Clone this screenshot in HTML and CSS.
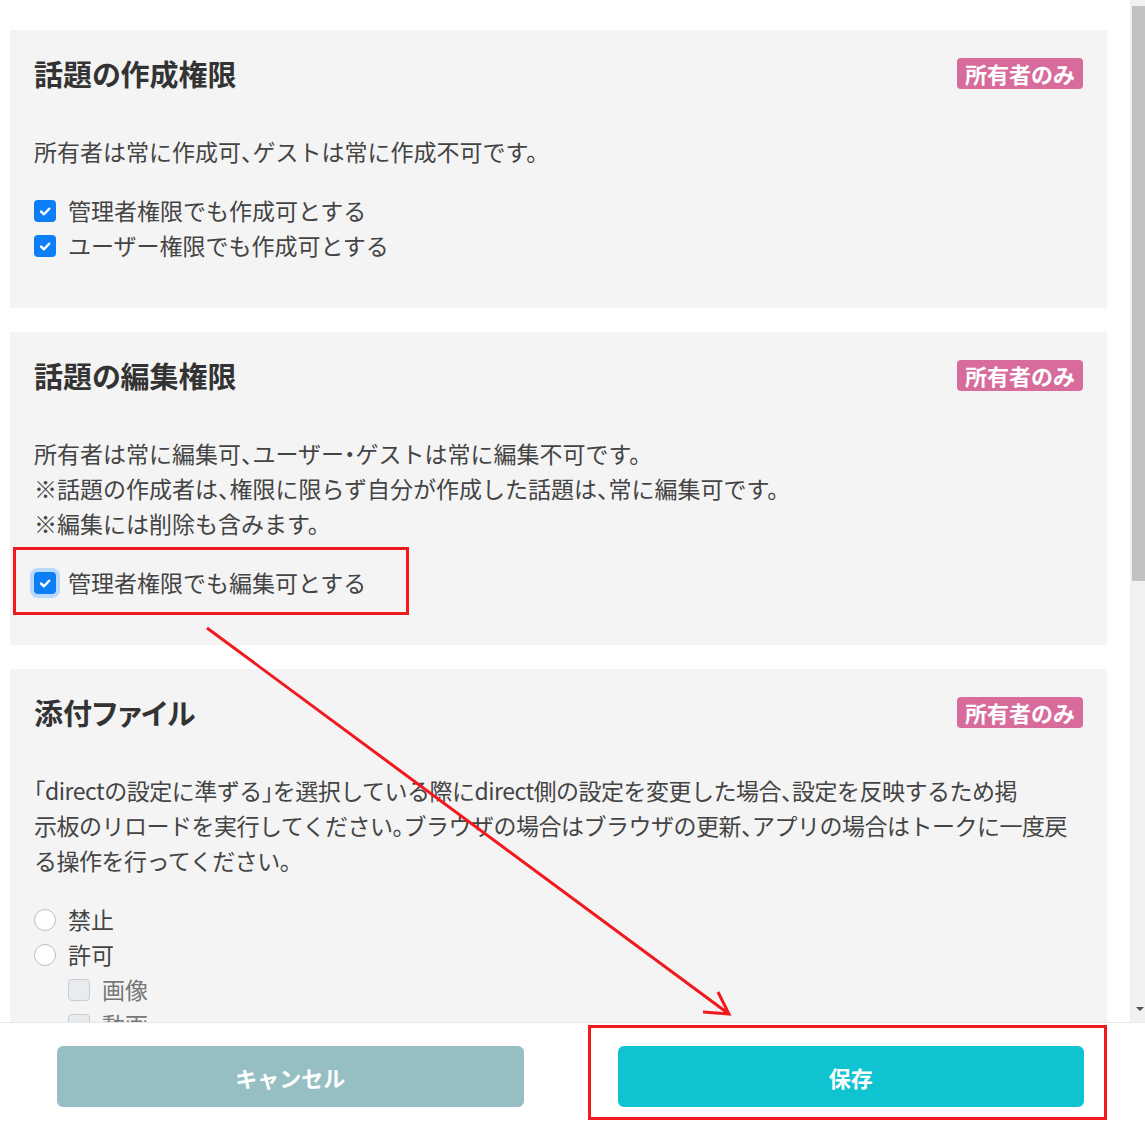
FILE: index.html
```html
<!DOCTYPE html>
<html lang="ja">
<head>
    <meta charset="UTF-8">
    <meta name="viewport" content="width=device-width, initial-scale=1.0">
    <title>掲示板の設定</title>
    <link rel="stylesheet" href="styles.css">
</head>
<body>
    <div class="main">
        <div class="scroll">
            <section class="card">
                <div class="card-head">
                    <h2>話題の作成権限</h2>
                    <span class="badge">所有者のみ</span>
                </div>
                <p class="desc">所有者は常に作成可、ゲストは常に作成不可です。</p>
                <div class="options">
                    <label class="opt"><span class="check on"><svg viewBox="0 0 22 22"><path d="M7 11.5l3 2.8 5.2-5.6"/></svg></span>管理者権限でも作成可とする</label>
                    <label class="opt"><span class="check on"><svg viewBox="0 0 22 22"><path d="M7 11.5l3 2.8 5.2-5.6"/></svg></span>ユーザー権限でも作成可とする</label>
                </div>
            </section>

            <section class="card">
                <div class="card-head">
                    <h2>話題の編集権限</h2>
                    <span class="badge">所有者のみ</span>
                </div>
                <p class="desc">所有者は常に編集可、ユーザー・ゲストは常に編集不可です。<br>※話題の作成者は、権限に限らず自分が作成した話題は、常に編集可です。<br>※編集には削除も含みます。</p>
                <div class="options">
                    <label class="opt"><span class="check on focus"><svg viewBox="0 0 22 22"><path d="M7 11.5l3 2.8 5.2-5.6"/></svg></span>管理者権限でも編集可とする</label>
                </div>
            </section>

            <section class="card">
                <div class="card-head">
                    <h2>添付ファイル</h2>
                    <span class="badge">所有者のみ</span>
                </div>
                <p class="desc tight">「directの設定に準ずる」を選択している際にdirect側の設定を変更した場合、設定を反映するため掲<br>示板のリロードを実行してください。ブラウザの場合はブラウザの更新、アプリの場合はトークに一度戻<br>る操作を行ってください。</p>
                <div class="options">
                    <label class="opt"><span class="radio"></span>禁止</label>
                    <label class="opt"><span class="radio"></span>許可</label>
                    <label class="opt sub"><span class="check off"></span>画像</label>
                    <label class="opt sub"><span class="check off"></span>動画</label>
                    <label class="opt sub"><span class="check off"></span>その他のファイル</label>
                    <label class="opt"><span class="radio"></span>directの設定に準ずる</label>
                </div>
            </section>
        </div>

        <div class="scrollbar">
            <div class="thumb"></div>
            <div class="arrow-down"></div>
        </div>
    </div>

    <div class="footer">
        <button class="btn cancel">キャンセル</button>
        <button class="btn save">保存</button>
    </div>

    <!-- annotations -->
    <svg class="marks" width="1145" height="1127" viewBox="0 0 1145 1127">
        <rect x="14.5" y="548.5" width="393" height="65"/>
        <rect x="589.5" y="1026.5" width="516" height="92"/>
        <path d="M207 628 L729 1014 M703 1012 L729 1014 L718 992"/>
    </svg>
</body>
</html>
```

FILE: styles.css
```css
* {
    box-sizing: border-box;
}
body {
    margin: 0;
    width: 1145px;
    height: 1127px;
    overflow: hidden;
    position: relative;
    background-color: #fff;
    color: #333;
    font-family: "Noto Sans CJK JP", "Noto Sans", sans-serif;
}
.main {
    display: flex;
    height: 1022px;
}
.scroll {
    flex: 1;
    overflow: hidden;
    padding: 30px 23px 0 10px;
}
.scrollbar {
    width: 15px;
    background-color: #f1f1f1;
    display: flex;
    flex-direction: column;
    align-items: flex-end;
    justify-content: space-between;
    padding: 6px 0 11px;
}
.thumb {
    width: 13px;
    height: 575px;
    background-color: #c1c1c1;
}
.arrow-down {
    width: 0;
    height: 0;
    margin-right: 1px;
    border-left: 4px solid transparent;
    border-right: 4px solid transparent;
    border-top: 4px solid #505050;
}
.card {
    background-color: #f4f4f4;
    padding: 22px 24px 45px;
    margin-bottom: 24px;
}
.card-head {
    display: flex;
    justify-content: space-between;
    align-items: center;
    margin-bottom: 40px;
}
.card-head h2 {
    margin: 0;
    font-size: 29px;
    line-height: 42px;
    font-weight: 700;
    color: #333;
    font-feature-settings: "palt";
}
.badge {
    background-color: #d76b9c;
    color: #fff;
    font-size: 22px;
    line-height: 31px;
    font-weight: 700;
    padding: 0 8px;
    border-radius: 4px;
}
.desc {
    margin: 0 0 24px;
    font-size: 23px;
    line-height: 35px;
    color: #444;
    font-feature-settings: "halt";
}
.desc.tight {
    letter-spacing: -0.5px;
}
.options {
    display: flex;
    flex-direction: column;
}
.opt {
    display: flex;
    align-items: center;
    gap: 12px;
    font-size: 23px;
    line-height: 35px;
    color: #444;
}
.opt.sub {
    padding-left: 34px;
    color: #777;
}
.check {
    width: 22px;
    height: 22px;
    border-radius: 4px;
    flex: none;
}
.check.on {
    background-color: #0d7ff6;
}
.check.on svg {
    display: block;
    width: 22px;
    height: 22px;
    fill: none;
    stroke: #fff;
    stroke-width: 2.4;
    stroke-linecap: round;
    stroke-linejoin: round;
}
.check.focus {
    box-shadow: 0 0 0 4px #b9d8fb;
}
.check.off {
    background-color: #e9ecef;
    border: 1px solid #c6ccd2;
}
.radio {
    width: 22px;
    height: 22px;
    border-radius: 50%;
    background-color: #fff;
    border: 1px solid #b9c0c6;
    flex: none;
}
.footer {
    height: 105px;
    border-top: 1px solid #e6e6e6;
    display: flex;
    gap: 94px;
    padding: 23px 61px 20px 57px;
}
.btn {
    flex: 1;
    height: 61px;
    border: none;
    border-radius: 6px;
    color: #fff;
    font-family: inherit;
    font-size: 22px;
    font-weight: 700;
}
.btn.cancel {
    background-color: #96bfc3;
}
.btn.save {
    background-color: #10c3d0;
}
.marks {
    position: absolute;
    left: 0;
    top: 0;
    pointer-events: none;
    fill: none;
    stroke: #f2191e;
    stroke-width: 3;
}
```
